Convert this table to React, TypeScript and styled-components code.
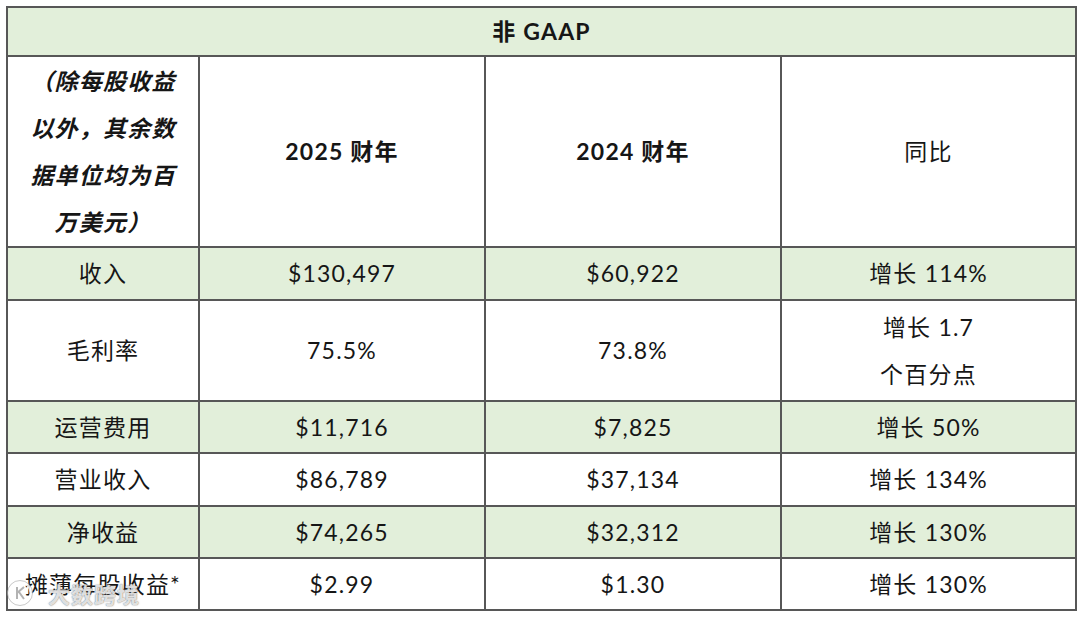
import styled, { createGlobalStyle } from "styled-components";

const GlobalStyle = createGlobalStyle`
  html, body {
    margin: 0;
    padding: 0;
    background: #ffffff;
  }
  body {
    font-family: Lato, "Noto Sans CJK SC", sans-serif;
    color: #161616;
  }
`;

const Page = styled.div`
  position: relative;
  width: 1080px;
  height: 617px;
  padding: 6px 0 0 6px;
  box-sizing: border-box;
`;

const Table = styled.table`
  border-collapse: collapse;
  table-layout: fixed;
  width: 1069px;
  font-size: 23px;
  letter-spacing: 1.2px;
`;

const Row = styled.tr<{ $green?: boolean; $h: number }>`
  height: ${p => p.$h}px;
  background: ${p => (p.$green ? "#e2efda" : "#ffffff")};
`;

const Cell = styled.td<{ $bold?: boolean }>`
  border: 2px solid #575757;
  text-align: center;
  vertical-align: middle;
  padding: 0 6px;
  font-weight: ${p => (p.$bold ? 700 : 400)};
  line-height: 47px;
  white-space: nowrap;
`;

const NoteCell = styled(Cell)`
  font-style: italic;
  font-weight: 700;
  line-height: 47px;
  padding: 0;
`;

const Watermark = styled.div`
  position: absolute;
  left: 6px;
  bottom: 8px;
  display: flex;
  align-items: center;
  gap: 14px;
  color: rgba(255, 255, 255, 0.8);
  font-size: 22px;
  font-weight: 700;
  letter-spacing: 1px;
  text-shadow: 0 0 1px rgba(70, 70, 70, 0.7), 0 0 2px rgba(120, 120, 120, 0.5);
  pointer-events: none;
`;

const rows = [
  { label: "收入", a: "$130,497", b: "$60,922", c: ["增长 114%"], green: true, h: 53 },
  { label: "毛利率", a: "75.5%", b: "73.8%", c: ["增长 1.7", "个百分点"], green: false, h: 101 },
  { label: "运营费用", a: "$11,716", b: "$7,825", c: ["增长 50%"], green: true, h: 52 },
  { label: "营业收入", a: "$86,789", b: "$37,134", c: ["增长 134%"], green: false, h: 53 },
  { label: "净收益", a: "$74,265", b: "$32,312", c: ["增长 130%"], green: true, h: 52 },
  { label: "摊薄每股收益*", a: "$2.99", b: "$1.30", c: ["增长 130%"], green: false, h: 52 },
];

export default function App() {
  return (
    <>
      <GlobalStyle />
      <Page>
        <Table>
          <colgroup>
            <col style={{ width: 192 }} />
            <col style={{ width: 286 }} />
            <col style={{ width: 296 }} />
            <col style={{ width: 295 }} />
          </colgroup>
          <tbody>
            <Row $green $h={47}>
              <Cell $bold colSpan={4}>非 GAAP</Cell>
            </Row>
            <Row $h={191}>
              <NoteCell>
                （除每股收益<br />以外，其余数<br />据单位均为百<br />万美元）
              </NoteCell>
              <Cell $bold>2025 财年</Cell>
              <Cell $bold>2024 财年</Cell>
              <Cell>同比</Cell>
            </Row>
            {rows.map(r => (
              <Row key={r.label} $green={r.green} $h={r.h}>
                <Cell>{r.label}</Cell>
                <Cell>{r.a}</Cell>
                <Cell>{r.b}</Cell>
                <Cell>
                  {r.c.map((t, i) => (
                    <div key={i}>{t}</div>
                  ))}
                </Cell>
              </Row>
            ))}
          </tbody>
        </Table>
        <Watermark>
          <svg width="28" height="28" viewBox="0 0 28 28">
            <circle cx="14" cy="14" r="11" fill="none" stroke="rgba(255,255,255,0.85)" strokeWidth="3" />
            <circle cx="14" cy="14" r="12.5" fill="none" stroke="rgba(120,120,120,0.5)" strokeWidth="0.8" />
            <path d="M11 8 V20 M11 14 L18 8 M13 13 L18 20" stroke="rgba(160,160,160,0.8)" strokeWidth="2" fill="none" />
          </svg>
          <span>大数跨境</span>
        </Watermark>
      </Page>
    </>
  );
}
